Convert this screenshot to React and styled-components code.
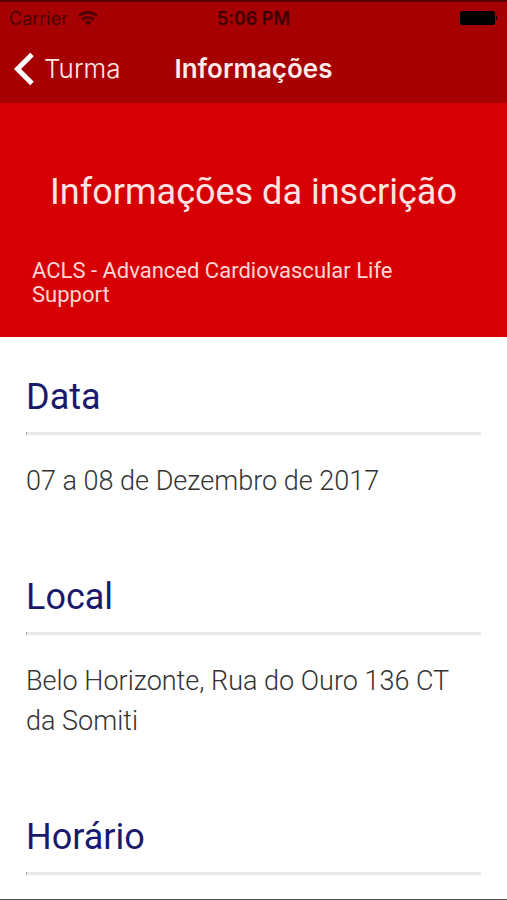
import React from "react";

import styled, { createGlobalStyle } from "styled-components";

const GlobalStyle = createGlobalStyle`
  * {
    box-sizing: border-box;
  }

  body {
    margin: 0;
    background-color: #ffffff;
    color: #333333;
    font-family: Roboto, "Liberation Sans", sans-serif;
  }
`;

const Page = styled.div`
  min-height: 100vh;
  border-bottom: 1px solid #555555;
`;

const Header = styled.header`
  border-top: 2px solid #5c0002;
  background-color: #a60003;
  font-family: Inter, "Liberation Sans", sans-serif;
`;

const StatusBar = styled.div`
  display: grid;
  grid-template-columns: 1fr auto 1fr;
  align-items: center;

  height: 32px;
  padding: 0 9px;
  color: #4a0002;
  font-size: 18px;
`;

const Carrier = styled.div`
  display: flex;
  align-items: center;
  gap: 10px;
`;

const Time = styled.div`
  color: #3a0001;
  font-weight: 600;
`;

const BatteryIcon = styled.svg`
  justify-self: end;
`;

const NavBar = styled.nav`
  display: grid;
  grid-template-columns: 1fr auto 1fr;
  align-items: center;

  height: 69px;
  padding: 0 14px;
  color: #ffe9e9;
`;

const BackLink = styled.a`
  display: flex;
  align-items: center;
  gap: 10px;

  color: inherit;
  font-size: 26px;
  font-weight: 300;
  text-decoration: none;
`;

const BackIcon = styled.svg`
  color: #ffffff;
`;

const NavTitle = styled.div`
  font-size: 26px;
  font-weight: 600;
`;

const Banner = styled.section`
  padding: 65px 32px 30px;
  background-color: #d60004;
  color: #ffd6d6;
`;

const BannerTitle = styled.h1`
  margin: 0 0 43px;
  color: #ffe2e2;
  font-size: 36px;
  font-weight: 400;
  line-height: 48px;
  text-align: center;
`;

const Course = styled.p`
  margin: 0;
  font-size: 22px;
  line-height: 24px;
`;

const Main = styled.main`
  padding: 37px 26px 0;
`;

const Section = styled.section`
  margin-bottom: 73px;

  &:last-child {
    margin-bottom: 0;
  }
`;

const SectionTitle = styled.h2`
  margin: 0;
  color: #1a1a6c;
  font-size: 36px;
  font-weight: 400;
  line-height: 46px;
`;

const Rule = styled.hr`
  height: 3px;
  margin: 12px 0 0;
  border: 0;
  border-left: 1px solid #aaaaaa;
  background-color: #e8e8e8;
`;

const SectionText = styled.p`
  margin: 26px 0 0;
  font-size: 27px;
  font-weight: 300;
  line-height: 40px;
`;

const sections = [
  { title: "Data", text: "07 a 08 de Dezembro de 2017" },
  { title: "Local", text: "Belo Horizonte, Rua do Ouro 136 CT da Somiti" },
  { title: "Horário" },
];

const App = () => {
  return (
    <Page>
      <GlobalStyle />
      <Header>
        <StatusBar>
          <Carrier>
            Carrier
            <svg width="20" height="16" viewBox="0 0 20 16" fill="none" stroke="currentColor" strokeWidth="2.6">
              <path d="M1 6a13 13 0 0 1 18 0M4.2 9.6a8.4 8.4 0 0 1 11.6 0" />
              <path d="M10 15.5l-3.2-3.4a4.5 4.5 0 0 1 6.4 0z" fill="currentColor" stroke="none" />
            </svg>
          </Carrier>
          <Time>5:06 PM</Time>
          <BatteryIcon width="38" height="14" viewBox="0 0 38 14" fill="#000000">
            <rect width="35" height="14" rx="2" />
            <path d="M36 4.5q2.5 2.5 0 5z" />
          </BatteryIcon>
        </StatusBar>
        <NavBar>
          <BackLink href="#turma">
            <BackIcon width="20" height="34" viewBox="0 0 20 34" fill="none" stroke="currentColor" strokeWidth="5">
              <path d="M18 2.5L3.5 17 18 31.500" />
            </BackIcon>
            Turma
          </BackLink>
          <NavTitle>Informações</NavTitle>
        </NavBar>
      </Header>
      <Banner>
        <BannerTitle>Informações da inscrição</BannerTitle>
        <Course>ACLS - Advanced Cardiovascular Life Support</Course>
      </Banner>
      <Main>
        {sections.map((section) => (
          <Section key={section.title}>
            <SectionTitle>{section.title}</SectionTitle>
            <Rule />
            {section.text && <SectionText>{section.text}</SectionText>}
          </Section>
        ))}
      </Main>
    </Page>
  );
};

export default App;
